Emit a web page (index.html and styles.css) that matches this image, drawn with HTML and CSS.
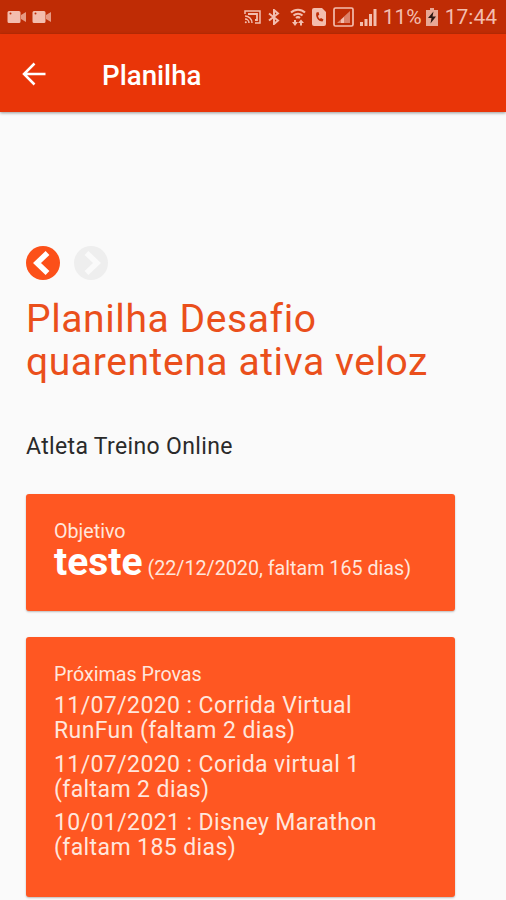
FILE: index.html
```html
<!DOCTYPE html>
<html lang="pt-BR">
<head>
    <meta charset="UTF-8">
    <meta name="viewport" content="width=device-width, initial-scale=1.0">
    <title>Planilha</title>
    <link rel="stylesheet" href="styles.css">
</head>
<body>
    <div class="status-bar">
        <div class="status-left">
            <svg width="20" height="14" viewBox="0 0 20 14" fill="currentColor">
                <path d="M2 1h10a1.5 1.5 0 0 1 1.5 1.5v9a1.5 1.5 0 0 1-1.5 1.5H2a1.5 1.5 0 0 1-1.5-1.5v-9A1.5 1.5 0 0 1 2 1z"/>
                <path d="M14 5l5-3v10l-5-3z" opacity="0.75"/>
                <circle cx="3.5" cy="3.5" r="1" fill="#bf2c05"/>
            </svg>
            <svg width="20" height="14" viewBox="0 0 20 14" fill="currentColor">
                <path d="M2 1h10a1.5 1.5 0 0 1 1.5 1.5v9a1.5 1.5 0 0 1-1.5 1.5H2a1.5 1.5 0 0 1-1.5-1.5v-9A1.5 1.5 0 0 1 2 1z"/>
                <path d="M14 5l5-3v10l-5-3z" opacity="0.75"/>
                <circle cx="3.5" cy="3.5" r="1" fill="#bf2c05"/>
            </svg>
        </div>
        <div class="status-right">
            <svg class="cast" width="17" height="14" viewBox="0 0 17 14" fill="none" stroke="currentColor" stroke-width="1.5">
                <path d="M1 4V1h15v12h-5M1 6a7 7 0 0 1 7 7M1 9a4 4 0 0 1 4 4"/>
                <path d="M4 4h9v6h-2" stroke-width="1.8"/>
                <circle cx="1.8" cy="12.3" r="1" fill="currentColor" stroke="none"/>
            </svg>
            <svg class="bluetooth" width="12" height="16" viewBox="0 0 12 16" fill="none" stroke="currentColor" stroke-width="2">
                <path d="M1 4.5l9 7L6 15V1l4 3.5-9 7"/>
            </svg>
            <svg class="wifi" width="16" height="18" viewBox="0 0 16 18" fill="none" stroke="currentColor" stroke-width="2">
                <path d="M1 4.5a10 10 0 0 1 14 0M3.5 7.5a6.5 6.5 0 0 1 9 0M6 10a3 3 0 0 1 4 0"/>
                <path d="M5 12v3M11 17.5v-3"/>
                <path d="M2 14h6l-3 4zM8 15h6l-3-3.5z" fill="currentColor" stroke="none"/>
            </svg>
            <svg class="sim" width="14" height="18" viewBox="0 0 14 18">
                <path d="M2 0h8l4 4v12a2 2 0 0 1-2 2H2a2 2 0 0 1-2-2V2a2 2 0 0 1 2-2z" fill="currentColor"/>
                <path d="M4.500 4.500c-1.500 4 1.500 9 6 9l1-2-2.500-1.500-1.200 1c-1-.8-1.600-2-1.800-3.200l1.300-1-.8-2.800z" fill="#bf2c05"/>
            </svg>
            <svg class="signal-box" width="21" height="20" viewBox="0 0 21 20" fill="none" stroke="currentColor">
                <rect x="1" y="1" width="19" height="18" rx="1.5" stroke-width="1.7"/>
                <path d="M4 16L17 4v12z" fill="#dc8068" stroke="none"/>
                <path d="M11 10v6H8v-3.300z" fill="currentColor" stroke="none"/>
            </svg>
            <svg class="signal" width="17" height="17" viewBox="0 0 17 17" fill="currentColor">
                <path d="M0 13h3v4H0zM4.500 10h3v7h-3zM9 5h3v12H9zM13.500 0h3v17h-3z"/>
            </svg>
            <span class="battery-text">11%</span>
            <svg class="battery" width="12" height="18" viewBox="0 0 12 18">
                <path d="M4 0h4v2h4v16H0V2h4z" fill="#e8a795"/>
                <path d="M7.500 3.500L2 10h3.500l-1 5.500L10 8.500H6.500z" fill="#2b1712"/>
            </svg>
            <span class="clock">17:44</span>
        </div>
    </div>

    <header class="app-bar">
        <svg class="back" width="24" height="24" viewBox="0 0 24 24" fill="none" stroke="currentColor" stroke-width="2.500">
            <path d="M23.500 12H2M12.500 1.500L2 12l10.500 10.500"/>
        </svg>
        <h1 class="app-title">Planilha</h1>
    </header>

    <main class="content">
        <div class="pager">
            <svg width="34" height="34" viewBox="0 0 34 34">
                <circle cx="17" cy="17" r="17" fill="#fc5019"/>
                <path d="M21.500 7L11 17l10.500 10" fill="none" stroke="#fff" stroke-width="5.500"/>
            </svg>
            <svg width="34" height="34" viewBox="0 0 34 34">
                <circle cx="17" cy="17" r="17" fill="#eeeeee"/>
                <path d="M12.500 7L23 17 12.500 27" fill="none" stroke="#fafafa" stroke-width="5.500"/>
            </svg>
        </div>

        <h2 class="title">Planilha Desafio<br>quarentena ativa veloz</h2>
        <p class="athlete">Atleta Treino Online</p>

        <section class="card goal">
            <div class="card-label">Objetivo</div>
            <div class="goal-line"><strong class="goal-name">teste</strong> <span>(22/12/2020, faltam 165 dias)</span></div>
        </section>

        <section class="card races">
            <div class="card-label">Próximas Provas</div>
            <ul class="race-list">
                <li>11/07/2020 : Corrida Virtual<br>RunFun (faltam 2 dias)</li>
                <li>11/07/2020 : Corida virtual 1<br>(faltam 2 dias)</li>
                <li>10/01/2021 : Disney Marathon<br>(faltam 185 dias)</li>
            </ul>
        </section>
    </main>
</body>
</html>
```

FILE: styles.css
```css
* {
    margin: 0;
    padding: 0;
    box-sizing: border-box;
    font-family: Roboto, sans-serif;
}

body {
    height: 900px;
    overflow: hidden;
    background: #fafafa;
}

svg {
    display: block;
    flex: none;
}

.status-bar {
    display: flex;
    justify-content: space-between;
    align-items: center;
    height: 34px;
    padding: 0 9px 0 7px;
    background: #bf2c05;
    color: #f3bdae;
}

.status-left {
    display: flex;
    gap: 5px;
}

.status-right {
    display: flex;
    align-items: center;
    font-size: 21px;
    line-height: 34px;
    white-space: nowrap;
}

.bluetooth {
    margin-left: 7px;
}

.wifi {
    margin-left: 10px;
}

.sim {
    margin-left: 6px;
}

.signal-box {
    margin-left: 7px;
}

.signal {
    margin-left: 6px;
}

.battery-text {
    width: 38px;
    margin-left: 6px;
}

.battery {
    margin-left: 5px;
}

.clock {
    margin-left: 7px;
}

.app-bar {
    display: flex;
    align-items: center;
    height: 78px;
    padding: 2px 0 0 22px;
    background: #e93508;
    color: white;
    box-shadow: 0 1px 3px rgba(0,0,0,0.4);
}

.app-title {
    margin: 2px 0 0 56px;
    font-size: 27.7px;
    font-weight: 500;
}

.content {
    padding: 134px 51px 0 26px;
}

.pager {
    display: flex;
    gap: 14px;
}

.title {
    margin-top: 18px;
    color: #ea4f1b;
    font-size: 39px;
    font-weight: 400;
    line-height: 43px;
    letter-spacing: 0.6px;
    white-space: nowrap;
}

.athlete {
    margin-top: 49px;
    color: #2a2a2a;
    font-size: 23px;
    line-height: 28px;
    letter-spacing: 0.35px;
}

.card {
    padding: 26px 28px;
    background: #ff5722;
    color: #ffe6dc;
    border-radius: 3px;
    box-shadow: 0 1px 2px rgba(0,0,0,0.25);
    white-space: nowrap;
}

.card-label {
    font-size: 19.7px;
    line-height: 24px;
}

.goal {
    height: 117px;
    margin-top: 33px;
}

.goal-line {
    font-size: 19.7px;
    line-height: 36px;
}

.goal-name {
    color: white;
    font-size: 39px;
    font-weight: 700;
}

.races {
    height: 260px;
    margin-top: 26px;
}

.race-list {
    display: flex;
    flex-direction: column;
    gap: 8.5px;
    margin-top: 6px;
    list-style: none;
    font-size: 23px;
    line-height: 25px;
    letter-spacing: 0.4px;
}
```
